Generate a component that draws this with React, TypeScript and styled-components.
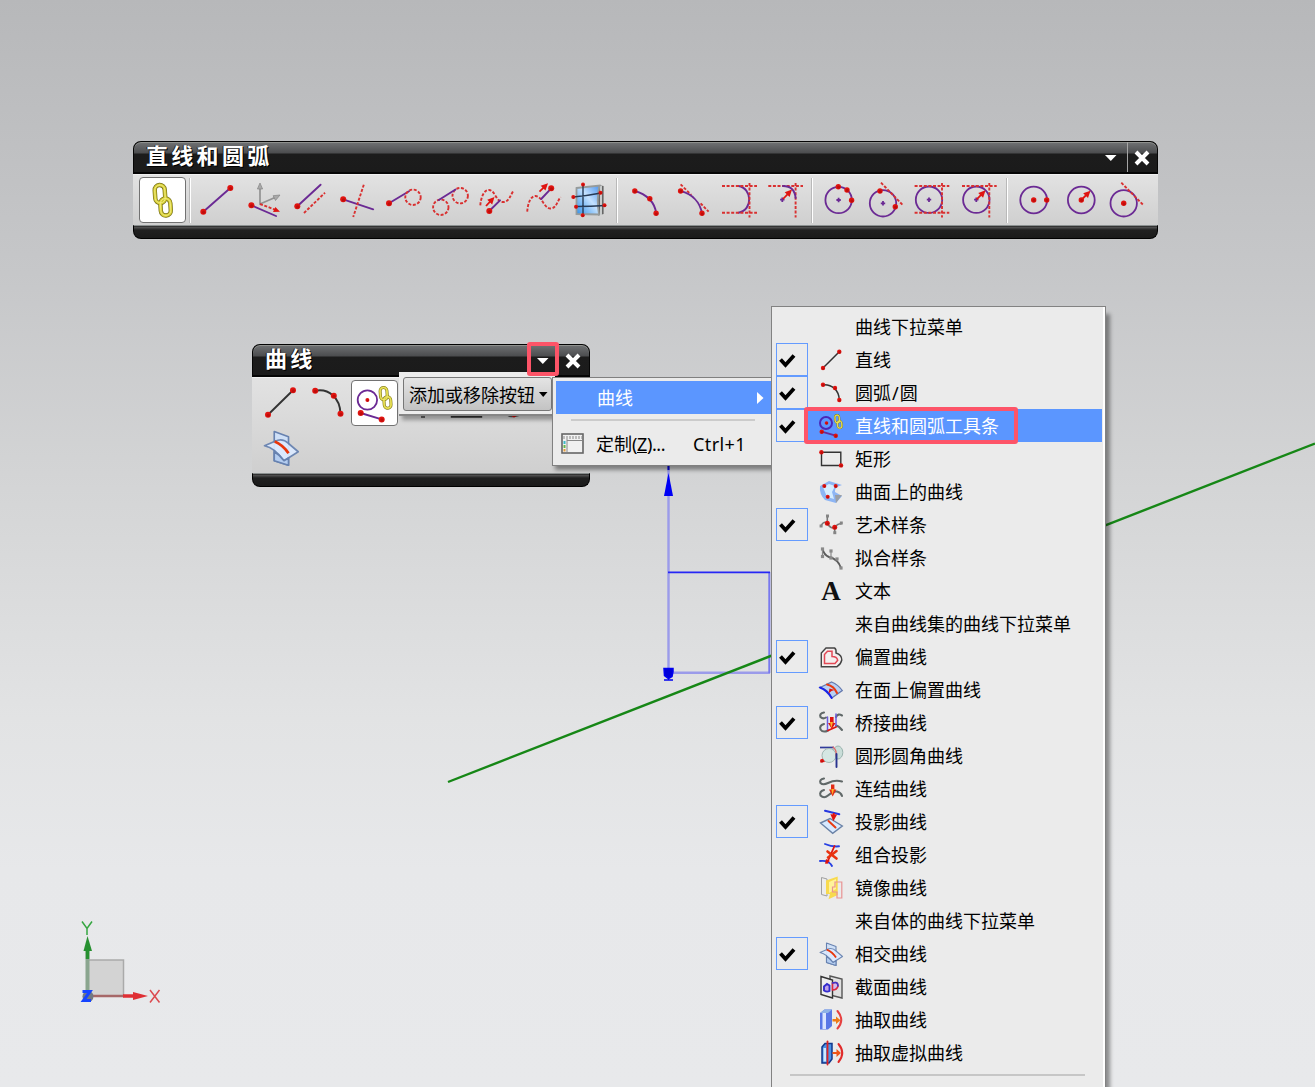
import React from "react";
import styled, { createGlobalStyle, css } from "styled-components";

const cjk = `"Noto Sans CJK SC", sans-serif`;
const RED = "#e01410";
const PURPLE = "#6b2a94";

const GlobalStyle = createGlobalStyle`
  * { box-sizing: border-box; }
  body { margin: 0; overflow: hidden; font-family: "Noto Sans", ${cjk}; }
`;

const Desktop = styled.main`
  position: relative;
  width: 1315px;
  height: 1087px;
  overflow: hidden;
  background: linear-gradient(#b7b8ba 0%, #c6c7c9 25%, #d4d5d6 45%, #e2e3e4 66%, #e7e8ea 80%, #e8e9eb 100%);
`;

const Viewport = styled.svg`
  position: absolute;
  inset: 0;
`;

const ToolWindow = styled.section<{ $x: number; $y: number; $w: number }>`
  position: absolute;
  left: ${(p) => p.$x}px;
  top: ${(p) => p.$y}px;
  width: ${(p) => p.$w}px;
  display: flex;
  flex-direction: column;
`;

const TitleBar = styled.header`
  display: flex;
  height: 33px;
  padding-left: 12px;
  border: 1px solid #050505;
  border-bottom-width: 2px;
  border-radius: 8px 8px 0 0;
  box-shadow: inset 0 1px 0 #8f918e;
  background: linear-gradient(#707274 0, #4c4d4f 11px, #1c1c1c 12px, #1b1b1b 100%);
`;

const Title = styled.h1`
  flex: 1;
  margin: 0;
  color: #fff;
  font: 700 22px/25px ${cjk};
  letter-spacing: 3.3px;
  text-shadow: 1px 1px 0 #000, -1px 0 0 #222;
`;

const TitleButton = styled.button<{ $divider?: boolean; $w: number }>`
  display: grid;
  place-items: center;
  width: ${(p) => p.$w}px;
  padding: 2px 0 0;
  border: 0;
  border-left: ${(p) => (p.$divider ? "1px solid #a5a5a5" : "0")};
  background: none;
`;

const ToolBody = styled.div<{ $h: number; $gutter?: number }>`
  display: flex;
  flex-wrap: wrap;
  align-content: flex-start;
  height: ${(p) => p.$h}px;
  padding: 2px ${(p) => p.$gutter ?? 4}px 0 6px;
  border-top: 1px solid #f0f0f0;
  background: linear-gradient(#e2e2e2, #cfcfcf);
`;

const WindowFoot = styled.footer`
  height: 14px;
  border: 1px solid #000;
  border-top-color: #8b9090;
  border-radius: 0 0 8px 8px;
  background: linear-gradient(#111 0, #565656 1px, #202020 4px, #1a1a1a 100%);
`;

const ToolButton = styled.button<{ $active?: boolean }>`
  display: grid;
  place-items: center;
  width: 46.5px;
  height: 45.5px;
  padding: 0;
  border: 0;
  background: none;
  ${(p) =>
    p.$active &&
    css`
      border: 1.5px solid #727272;
      border-radius: 4px;
      background: #fff;
    `}
`;

const ToolSeparator = styled.span`
  width: 8.7px;
  height: 45px;
  padding: 1px 3.5px 0;
  &::before {
    content: "";
    display: block;
    width: 2px;
    height: 45px;
    background: linear-gradient(90deg, #b9b9b9 50%, #fff 50%);
  }
`;

const DropTip = styled.div`
  position: absolute;
  left: 399px;
  top: 372px;
  width: 156px;
  height: 44px;
  padding: 5px 4px;
  background: #ececec;
  border-bottom: 2px solid #858585;
  box-shadow: 3px 4px 4px #0005;
`;

const DropButton = styled.button`
  display: flex;
  align-items: center;
  gap: 4px;
  width: 149px;
  height: 34px;
  padding: 0 0 0 5px;
  border: 1.5px solid #777;
  border-radius: 3px;
  background: linear-gradient(#e4e4e4, #c3c3c3);
  color: #000;
  font: 18px/30px ${cjk};
  white-space: nowrap;
`;

const SubMenu = styled.div`
  position: absolute;
  left: 552px;
  top: 377px;
  width: 222px;
  height: 89px;
  padding: 3px 0 0 3px;
  border: 1.5px solid #808080;
  background: #ebebeb;
  box-shadow: 3px 4px 4px #0006;
`;

const SubItem = styled.div<{ $on?: boolean }>`
  display: flex;
  align-items: center;
  height: ${(p) => (p.$on ? 33 : 46)}px;
  padding-left: ${(p) => (p.$on ? 41 : 5)}px;
  background: ${(p) => (p.$on ? "#5b96ff" : "none")};
  color: ${(p) => (p.$on ? "#fff" : "#000")};
  font: 18px/30px "Noto Sans", ${cjk};
  white-space: nowrap;
`;

const SubLabel = styled.span<{ $w: number }>`
  width: ${(p) => p.$w}px;
`;

const KeyName = styled.span`
  letter-spacing: -0.4px;
`;

const Shortcut = styled.span`
  font-family: "Noto Sans";
  font-size: 18px;
  letter-spacing: 0.4px;
`;

const SubRule = styled.hr`
  height: 2px;
  margin: 5px 18px 0 15px;
  border: 0;
  background: #cbcbcb;
`;

const Menu = styled.ul`
  position: absolute;
  left: 771px;
  top: 306px;
  width: 335px;
  height: 800px;
  margin: 0;
  padding: 3px 3px 0 4px;
  list-style: none;
  border: 1.5px solid #828282;
  background: #ebebeb;
  box-shadow: inset -2px 0 0 #fff, 5px 7px 4px -1px #0006;
`;

const MenuRow = styled.li<{ $on?: boolean }>`
  display: grid;
  grid-template-columns: 32px 11px 24px 12px 1fr;
  align-items: center;
  height: 33px;
  background: ${(p) => (p.$on ? "linear-gradient(90deg, #ebebeb 32px, #5b96ff 32px)" : "none")};
  color: ${(p) => (p.$on ? "#fff" : "#000")};
`;

const CheckCell = styled.span<{ $on?: boolean }>`
  display: flex;
  align-items: center;
  height: 33px;
  padding: 2px 0 0 2px;
  border: ${(p) => (p.$on ? "1.5px solid #649bff" : "0")};
`;

const IconCell = styled.span`
  grid-column: 3;
  display: flex;
  height: 24px;
`;

const Label = styled.span`
  grid-column: 5;
  font: 18px/32px "Noto Sans", ${cjk};
  white-space: nowrap;
`;

const Slash = styled.span`
  padding: 0 1px;
`;

const LetterIcon = styled.b`
  width: 24px;
  color: #111;
  font: 700 27px/25px "Liberation Serif", serif;
  text-align: center;
`;

const MenuRule = styled.li`
  height: 2px;
  margin: 5px 17px 0 14px;
  background: #c6c6c6;
`;

const Marker = styled.div<{ $x: number; $y: number; $w: number; $h: number }>`
  position: absolute;
  left: ${(p) => p.$x}px;
  top: ${(p) => p.$y}px;
  width: ${(p) => p.$w}px;
  height: ${(p) => p.$h}px;
  border: 4.5px solid #fd5468;
  border-radius: 3px;
`;

/* ---------- drawing primitives ---------- */

const Dot = ({ x, y, r = 3 }: { x: number; y: number; r?: number }) => (
  <g>
    <circle cx={x} cy={y} r={r} fill={RED} />
    <circle cx={x + 0.3} cy={y + 0.6} r={r * 0.55} fill="#a80808" opacity={0.6} />
  </g>
);
const Stroke = ({ d, c = PURPLE, w = 1.9 }: { d: string; c?: string; w?: number }) => (
  <path d={d} stroke={c} strokeWidth={w} fill="none" strokeLinecap="round" strokeLinejoin="round" />
);
const Dash = ({ d }: { d: string }) => (
  <path d={d} stroke="#d93030" strokeWidth={1.9} fill="none" strokeDasharray="3 1.6" />
);
const Ring = ({ x, y, r = 13.2 }: { x: number; y: number; r?: number }) => (
  <circle cx={x} cy={y} r={r} fill="none" stroke={PURPLE} strokeWidth={1.8} />
);
const Plus = ({ x, y }: { x: number; y: number }) => (
  <path d={`M${x - 2.2} ${y}h4.4M${x} ${y - 2.2}v4.4`} stroke={PURPLE} strokeWidth={1.8} />
);
const Arrow = ({ x, y, to }: { x: number; y: number; to: [number, number] }) => {
  const a = Math.atan2(to[1] - y, to[0] - x);
  const p = (d: number, s: number) =>
    `${to[0] - d * Math.cos(a) + s * Math.sin(a)} ${to[1] - d * Math.sin(a) - s * Math.cos(a)}`;
  return (
    <g>
      <path d={`M${x} ${y}L${p(3, 0)}`} stroke={RED} strokeWidth={1.8} />
      <path d={`M${to[0]} ${to[1]}L${p(7, 3.4)}L${p(7, -3.4)}Z`} fill={RED} />
    </g>
  );
};
const Chain = ({ x, y, s }: { x: number; y: number; s: number }) => (
  <g transform={`translate(${x} ${y}) scale(${s})`} fill="none" strokeLinecap="round">
    {["#77711a", "#d8cf35", "#f1ec86"].map((c, i) => (
      <g key={c} stroke={c} strokeWidth={[4.4, 3, 0.9][i]}>
        <rect x={-7.5} y={-15} width={10} height={18} rx={5} transform="rotate(-4 -3 -6)" />
        <rect x={-2} y={-1.5} width={10} height={17} rx={5} transform="rotate(-4 3 6)" />
      </g>
    ))}
  </g>
);
const Icon = ({ size = 36, children }: { size?: number; children: React.ReactNode }) => (
  <svg width={size} height={size} viewBox={`0 0 ${size} ${size}`} overflow="visible">
    {children}
  </svg>
);

/* ---------- toolbar icons ---------- */

const lineTools = [
  <><Stroke d="M4.3 29.7L31.3 6" /><Dot x={4.3} y={29.7} /><Dot x={31.3} y={6} /></>,
  <>
    <Stroke d="M14 22V6M14 22L29 15.5" c="#929292" w={1.7} />
    <path d="M14 1l2.6 6h-5.2zM34 13l-4.5 5.5-2.4-4.8z" fill="#a9a9a9" stroke="#858585" strokeWidth={0.7} />
    <Dash d="M14 22L30 28" />
    <path d="M34 29.7l-7 .2 2.4-5z" fill={RED} />
    <Stroke d="M5.4 23.3L30 34" /><Dot x={5.4} y={23.3} />
  </>,
  <><Stroke d="M5.3 24.3L28.6 2.7" /><Dash d="M12 31L33 10.7" /><Dot x={5.3} y={24.3} /></>,
  <><Stroke d="M4.2 17.3L34.2 27.3" /><Dash d="M24.8 2.7L14.2 35" /><Dot x={4.2} y={17.3} /></>,
  <><Stroke d="M4 21.3L24 9.3" /><Dash d="M35.7 15.3a7.7 7.7 0 1 1-15.4 0a7.7 7.7 0 1 1 15.4 0" /><Dot x={4} y={21.3} /></>,
  <>
    <Dash d="M35.9 13.7a7.7 7.7 0 1 1-15.4 0a7.7 7.7 0 1 1 15.4 0M16.5 25.3a7.7 7.7 0 1 1-15.4 0a7.7 7.7 0 1 1 15.4 0" />
    <Stroke d="M6.8 18L23.5 7.5" />
  </>,
  <>
    <Dash d="M2.3 23.3C3 15 6 8 11 8C17 8 18 20 25 20C31 20 32 14 35.5 8.5" />
    <Stroke d="M11.3 29L22 18.3" /><Arrow x={8} y={24} to={[16.5, 15]} /><Dot x={11.3} y={29} />
  </>,
  <>
    <Dash d="M2.2 29.7C3 20 6 14 10.5 14C17 14 19 26.5 25.5 26.5C31 26.5 32 20 35.5 15" />
    <Stroke d="M16.2 17L26.2 6.3" /><Arrow x={14.5} y={9.7} to={[23, 1.2]} /><Dot x={26.2} y={6.3} />
  </>,
  <>
    <defs>
      <linearGradient id="glass" x1="0" y1="1" x2="1" y2="0">
        <stop stopColor="#2f8fe8" /><stop offset=".55" stopColor="#c5e2ff" /><stop offset="1" stopColor="#4b93ec" />
      </linearGradient>
    </defs>
    <path d="M27 3L32.6 4V32L27 33.5Z" fill="#666" />
    <path d="M30 4V33" stroke="#c9cccc" strokeWidth={2} />
    <path d="M5.5 6L28.5 3.5C26.5 12 26.5 24 28 32.5L5.5 32Z" fill="url(#glass)" stroke="#969b9b" strokeWidth={1.8} />
    <Stroke d="M12 2V34M2 15Q15 14 30 11M5 24.5Q20 24.5 34 23.5" c="#263a55" w={1.4} />
    {[[12, 2.5], [2.3, 15], [29.5, 10.7], [5, 24.7], [33.5, 23.3], [11.7, 33.3]].map(([x, y]) => <Dot key={`${x}`} x={x} y={y} r={2} />)}
  </>,
];

const arcTools = [
  <><Stroke d="M7.8 9C19 12 28 20 29.1 31.3" /><Dot x={7.8} y={9} r={2.7} /><Dot x={22.8} y={16.7} r={2.7} /><Dot x={29.1} y={31.3} r={2.7} /></>,
  <><Dash d="M7.6 2.3L18.3 13M27.6 21.3L35.6 29.7" /><Stroke d="M7.6 9C19 12 27 20 29 31.3" /><Dot x={7.6} y={9} r={2.7} /><Dot x={29} y={31.3} r={2.7} /></>,
  <><Stroke d="M18.5 4C32 6 33.5 28 18.5 30.7" /><Dash d="M2 4H37M2 30.7H37M29.5 1V35.5" /></>,
  <><Dash d="M2.3 4H37M29.6 1V35.5" /><Stroke d="M17 4Q28.5 4 29.6 16" /><Plus x={16.3} y={17.7} /><Arrow x={17} y={17} to={[26, 7.6]} /></>,
];

const circleTools = [
  <><Ring x={17.6} y={18} /><Plus x={17.6} y={18} /><Dot x={17.3} y={4.7} r={2.7} /><Dot x={26} y={8} r={2.7} /><Dot x={30.6} y={18.3} r={2.7} /></>,
  <><Ring x={15} y={21.3} /><Plus x={15} y={21.3} /><Dash d="M13 .7L34.7 23" /><Dot x={12} y={9} r={2.7} /><Dot x={27.3} y={24.7} r={2.7} /></>,
  <><Ring x={15} y={17.7} /><Plus x={15} y={17.7} /><Dash d="M.6 4H35.3M.6 30.7H35.3M28 1V35.5" /></>,
  <><Ring x={15.3} y={17.7} /><Dash d="M1 4H35.7M28.3 1V35.5" /><Plus x={15.3} y={17.7} /><Arrow x={15.7} y={17.3} to={[24.6, 8.3]} /></>,
];

const fullCircleTools = [
  <><Ring x={17.7} y={18} r={13.4} /><Dot x={17.7} y={18} r={2.7} /><Dot x={30.7} y={18} r={2.7} /></>,
  <><Ring x={18.3} y={18} r={13.4} /><Arrow x={18.3} y={18} to={[27.5, 8.7]} /><Dot x={18.3} y={18} r={2.7} /></>,
  <><Ring x={14.7} y={21.3} /><Dash d="M12.3 .7L34.3 23" /><Dot x={14.7} y={21.3} r={2.7} /></>,
];

const Crossing = () => (
  <g strokeLinejoin="round" stroke="#6782b0" strokeWidth={1.1}>
    <path d="M7.5 1L17 4.5V23.5L7.5 20.5Z" fill="#cfe0f7" />
    <path d="M1 10.5L8 7.5Q13 5 17 9L23.5 14.5L14 20.5Q8 12 1 10.5Z" fill="#dceaff" opacity={0.93} />
    <path d="M7.5 14.5V20.5L17 23.5V18.7L14 20.5Q11 16.5 7.5 14.5Z" fill="#b4cdf0" />
    <path d="M7.8 7.6Q13.5 10 17 15.5" fill="none" stroke="#e8360c" strokeWidth={1.8} />
  </g>
);

/* ---------- menu icons (24px grid) ---------- */

const menuIcons: Record<string, React.ReactNode> = {
  line: <><Stroke d="M4 20L20.3 3.7" c="#333" w={1.5} /><Dot x={4} y={20} r={2.2} /><Dot x={20.3} y={3.7} r={2.2} /></>,
  arc: <><Stroke d="M4 3.7C13 3 20 9 20.3 19" c="#333" w={1.5} /><Dot x={4} y={3.7} r={2.2} /><Dot x={16} y={7} r={2.2} /><Dot x={20.3} y={19} r={2.2} /></>,
  lineArc: (
    <>
      <circle cx={7} cy={9} r={6} fill="none" stroke="#4b28b8" strokeWidth={2} />
      <Chain x={19.3} y={7.5} s={0.43} />
      <Stroke d="M2.7 17.7L16.7 21.7" /><Dot x={7.5} y={9} r={1.8} /><Dot x={2.7} y={17.7} r={2.2} /><Dot x={16.7} y={21.7} r={2.2} />
    </>
  ),
  rect: <><path d="M2.5 5.3H21.8V18.5H2.5Z" fill="none" stroke="#333" strokeWidth={1.4} /><Dot x={2.4} y={5.2} r={2.2} /><Dot x={22} y={18.4} r={2.2} /></>,
  surface: (
    <>
      <path d="M1 6L10 1L23 5Q15 7 16 12L23 16L17 23L6 20Q0 14 1 6Z" fill="#8db5f4" />
      <path d="M4 7L10 4L16 6L13 12L15 19L8 17Z" fill="#d5edff" />
      <path d="M16 15L23 15L17 23Z" fill="#9a9fa6" />
      <Dot x={5.3} y={6} r={2} /><Dot x={16.7} y={6} r={2} /><Dot x={8.7} y={16.7} r={2} />
    </>
  ),
  spline: (
    <>
      <Stroke d="M8.3 3V10M15.7 14V20M2 13Q5 7 8.5 10.5Q12 17 16 13.5Q20 10 22 11" c="#777" w={1.6} />
      {["M7 1.5h3v3h-3z", "M.6 11.5h3v3h-3z", "M14.3 18.2h3v3h-3z", "M20.8 8.5h3v3h-3z"].map((d) => <path key={d} d={d} fill="#858585" />)}
      <Dot x={8.3} y={10.3} r={2.5} /><Dot x={15.7} y={14.3} r={2.5} />
    </>
  ),
  fit: (
    <>
      <Stroke d="M3.5 3Q5 9 10 11Q19 13 22 22" c="#5c5c5c" w={1.9} />
      {[[3.5, 3], [3.5, 10.5], [12, 5], [12, 12], [18, 13], [22, 22]].map(([x, y]) => <rect key={`${x}-${y}`} x={x - 1.6} y={y - 1.6} width={3.2} height={3.2} fill="#8a8a8a" />)}
      <Stroke d="M3.5 3V10.5M12 5V12" c="#8a8a8a" w={1.2} />
    </>
  ),
  offset: (
    <>
      <path d="M2.3 21.7V8L7 3H15.5Q17.5 4 17 8Q23 10 22.8 15Q22 19 18 21.7Z" fill="#f4eeee" stroke="#444" strokeWidth={1.4} />
      <path d="M5.5 18.5V9.5L8.5 6.3H13V11.5Q18 11.5 18.7 15.3L16 18.5Z" fill="none" stroke="#e24855" strokeWidth={1.5} />
    </>
  ),
  offsetFace: (
    <>
      <path d="M1 9.5L12.7 4Q19 6.5 23.3 12.5L12.7 20Q9 11 1 9.5Z" fill="#b9d0f4" stroke="#6479ad" strokeWidth={1.2} />
      <Stroke d="M1 9.5Q8 12 12.7 20" c="#1924e8" w={2} /><Stroke d="M8 6.5Q15 8 18 15" c="#e83c12" w={2} />
      <path d="M9.5 15.5l1-5 5 1.5-3 1z" fill={RED} />
    </>
  ),
  bridge: (
    <>
      <Stroke d="M5 1.5Q0 2.5 1.5 6Q4 8.5 7 6.5M17 6Q19 2 23 4.5" c="#606868" w={2.1} />
      <Stroke d="M5 13Q0 14.5 1.5 18.5Q4 22 9 19.5M17 14.5Q20 15 23 19" c="#606868" w={2.1} />
      <Stroke d="M8.5 6V19M17 3V15" c="#6b5bdf" w={1.5} />
      <path d="M11 6h3.6v6h2l-3.8 6-3.8-6h2z" fill={RED} /><path d="M11 11h3l-1.7 6z" fill="#ffb22b" />
      <Stroke d="M9 19.5L17 16" c={RED} w={1.8} />
    </>
  ),
  fillet: (
    <>
      <path d="M1 3.5H15" stroke="#313c9a" strokeWidth={1.7} />
      <ellipse cx={19} cy={8.5} rx={4.8} ry={6.5} fill="#c9ddd8" stroke="#9ab4ae" />
      <circle cx={10} cy={11.5} r={7} fill="#d5e7e3" stroke="#a2b8b4" />
      <Stroke d="M14 3Q18 6 17 12" c="#e26666" w={1.2} /><Stroke d="M17.5 10V23" c="#28348f" />
      <path d="M1 18.5l2.5-4 2.5 3.5z" fill={RED} /><Dot x={2.8} y={16.8} r={1.8} />
    </>
  ),
  join: (
    <>
      <Stroke d="M5 1.5Q0 2.5 1.5 6Q4 8.5 9 6Q16 2.5 23 4.5" c="#606868" w={2.1} />
      <Stroke d="M5 13Q0 14.5 1.5 18.5Q5 22 9 18.5Q14 14 18 14.5Q22 15.5 23 19" c="#606868" w={2.1} />
      <path d="M12 7.5h3.4v5h2l-3.7 7-3.7-7h2z" fill="#e22b16" /><path d="M12.3 12h2.8l-1.6 6z" fill="#ffae22" />
    </>
  ),
  project: (
    <>
      <path d="M1.5 13L11 8.5L23.3 16L13.7 23.3Z" fill="#d7e9ff" stroke="#6a82a6" strokeWidth={1.4} />
      <Stroke d="M9.5 11L16.5 17.5" c="#e83c12" w={2} /><Stroke d="M6 .7L20.3 4.3" c="#2738e0" w={2} /><Arrow x={14.8} y={3} to={[14.4, 11.3]} />
    </>
  ),
  combined: (
    <>
      <Stroke d="M6 1Q13 4 20 3.3M1 18Q10 17 13 23" c="#2740e3" /><Stroke d="M15.5 3L12 11L8 20" c={RED} w={1.8} />
      <Stroke d="M8.5 8.5L17.5 15.5M17.5 8L9 14.5" c="#e9330f" w={2.6} />
      <path d="M6 21l1-5 4 2z" fill={RED} />
    </>
  ),
  mirror: (
    <>
      <path d="M2.5 1.5V18.5L8 20V3Z" fill="#ececec" stroke="#a0a0a0" />
      <path d="M7 4.5L18.7 .5V19L9.5 23.3L11 18H7Z" fill="#f8da4e" /><path d="M10 6L17 3V13L10 17Z" fill="#fff39a" />
      <path d="M16 6H22.8V22H18V16H13.5V11H16Z" fill="none" stroke="#e99393" strokeWidth={1.2} />
    </>
  ),
  crossing: <Crossing />,
  section: (
    <>
      <path d="M11 1L23 4V23L11 20Z" fill="#e0e0e0" stroke="#555" strokeWidth={1.4} />
      <path d="M2 1.5L13.5 5V23L2 19.5Z" fill="#eee" stroke="#333" strokeWidth={1.4} />
      <path d="M5 15.5V11.5L8 9L10.5 10.5V16Q8 17.5 5 15.5Z" fill="#bfa1e8" stroke="#332ccc" strokeWidth={1.9} />
      <path d="M13.5 8Q19 6 19 11Q18 15 13.5 15Z" fill="#d0bcf0" stroke="#dc2740" strokeWidth={1.6} />
      <Stroke d="M13.5 8Q19 6 19 11" c="#3b36cc" w={1.6} />
    </>
  ),
  extract: (
    <>
      <path d="M1 5L5.5 1.5H13V18L9 21.5H1Z" fill="#5a78e6" /><path d="M3.5 5H7V21H3.5Z" fill="#dae5ff" /><path d="M5.5 1.5H13L9 5H1Z" fill="#8fb3e6" />
      <Stroke d="M18.5 3Q26 12 18.5 20.5" c="#e64040" w={2} /><path d="M13.5 11h3.5V8.5l4.5 3.7-4.5 3.7v-2.5h-3.5z" fill="#ee7a15" />
    </>
  ),
  extractVirtual: (
    <>
      <path d="M3 6L6 2.5H13V18L10 22H3Z" fill="#4a93e8" stroke="#12388c" strokeWidth={1.5} /><path d="M4.5 7H7V20.5H4.5Z" fill="#cfeaff" />
      <Stroke d="M8.5 .5V23.5" c="#dd2424" w={1.8} /><Stroke d="M19.5 3Q27 12 19.5 21" c="#e02a2a" w={2} />
      <path d="M13.5 11h4V8l4.5 4-4.5 4v-3h-4z" fill="#ee5518" />
    </>
  ),
};

type Entry = { text: string; icon?: string; checked?: boolean; on?: boolean };
const entries: Entry[] = [
  { text: "曲线下拉菜单" },
  { text: "直线", icon: "line", checked: true },
  { text: "圆弧/圆", icon: "arc", checked: true },
  { text: "直线和圆弧工具条", icon: "lineArc", checked: true, on: true },
  { text: "矩形", icon: "rect" },
  { text: "曲面上的曲线", icon: "surface" },
  { text: "艺术样条", icon: "spline", checked: true },
  { text: "拟合样条", icon: "fit" },
  { text: "文本", icon: "letter" },
  { text: "来自曲线集的曲线下拉菜单" },
  { text: "偏置曲线", icon: "offset", checked: true },
  { text: "在面上偏置曲线", icon: "offsetFace" },
  { text: "桥接曲线", icon: "bridge", checked: true },
  { text: "圆形圆角曲线", icon: "fillet" },
  { text: "连结曲线", icon: "join" },
  { text: "投影曲线", icon: "project", checked: true },
  { text: "组合投影", icon: "combined" },
  { text: "镜像曲线", icon: "mirror" },
  { text: "来自体的曲线下拉菜单" },
  { text: "相交曲线", icon: "crossing", checked: true },
  { text: "截面曲线", icon: "section" },
  { text: "抽取曲线", icon: "extract" },
  { text: "抽取虚拟曲线", icon: "extractVirtual" },
];

const labelParts = (text: string) =>
  text.split("/").map((part, i) => (
    <React.Fragment key={part}>
      {i > 0 && <Slash>/</Slash>}
      {part}
    </React.Fragment>
  ));

const WindowHead = ({ title, split }: { title: string; split?: boolean }) => (
  <TitleBar>
    <Title>{title}</Title>
    <TitleButton $w={32}>
      <svg width="12" height="6"><path d="M0 0h11.5L5.8 6z" fill="#fff" /></svg>
    </TitleButton>
    <TitleButton $w={30} $divider={split}>
      <svg width="18" height="18"><path d="M2 3L14 15M14 3L2 15" stroke="#fff" strokeWidth="4" /></svg>
    </TitleButton>
  </TitleBar>
);

const Tools = ({ items }: { items: React.ReactNode[] }) => (
  <>{items.map((item, i) => <ToolButton key={i}><Icon>{item}</Icon></ToolButton>)}</>
);

const Scene = () => (
  <Viewport width="1315" height="1087">
    <path d="M668.5 466V673M668 672.8H770" stroke="#9b9bea" strokeWidth="2.4" />
    <path d="M769.3 572V673" stroke="#7878ee" strokeWidth="2" />
    <path d="M668 572.3H770" stroke="#2626f5" strokeWidth="1.8" />
    <path d="M448 782L1315 443.5" stroke="#168716" strokeWidth="2.4" />
    <path d="M668.5 473L673 496H664Z" fill="#0000f5" />
    <path d="M668.5 464V470" stroke="#0000e0" strokeWidth="2" />
    <path d="M664 668.5h9v3l-1 5-3.5 2-4-3zM664 680h9" fill="#0000d8" stroke="#0000f0" strokeWidth="1.5" />

    <rect x="88" y="960" width="35.5" height="36" fill="#d3d3d3" stroke="#aaa" strokeWidth="1.5" />
    <path d="M87.5 996V950" stroke="#8aa58f" strokeWidth="4" />
    <path d="M87.5 959V948" stroke="#269030" strokeWidth="3.5" />
    <path d="M87.5 936L92 951H83.5Z" fill="#269030" />
    <path d="M87 996H124" stroke="#a66868" strokeWidth="2.5" />
    <path d="M123 996H135" stroke="#df2f34" strokeWidth="3.5" />
    <path d="M148 996L133 1000V992Z" fill="#df2f34" />
    <path d="M82 921.5L87 928.5L92 921.5M87 928.5V935" fill="none" stroke="#35a641" strokeWidth="1.5" />
    <path d="M150 990L159.5 1002.5M159.5 990L150 1002.5" stroke="#dc4a4f" strokeWidth="1.5" />
    <circle cx="88" cy="996.5" r="5.5" fill="#717983" />
    <path d="M82.5 991.5H90L83.5 1000.5H91" fill="none" stroke="#1544ff" strokeWidth="3" />
  </Viewport>
);

export default function App() {
  return (
    <Desktop>
      <GlobalStyle />
      <Scene />

      <ToolWindow $x={133} $y={141} $w={1025}>
        <WindowHead title="直线和圆弧" split />
        <ToolBody $h={51}>
          <ToolButton $active><Icon><Chain x={18.5} y={18} s={1} /></Icon></ToolButton>
          <ToolSeparator />
          <Tools items={lineTools} />
          <ToolSeparator />
          <Tools items={arcTools} />
          <ToolSeparator />
          <Tools items={circleTools} />
          <ToolSeparator />
          <Tools items={fullCircleTools} />
        </ToolBody>
        <WindowFoot />
      </ToolWindow>

      <ToolWindow $x={252} $y={344} $w={338}>
        <WindowHead title="曲线" />
        <ToolBody $h={96} $gutter={30}>
          <ToolButton><Icon><Stroke d="M5 29.7L30 5.3" c="#333" /><Dot x={5} y={29.7} /><Dot x={30} y={5.3} /></Icon></ToolButton>
          <ToolButton><Icon><Stroke d="M5.2 5.7C19 3 30 13 30.5 28.7" c="#333" /><Dot x={5.2} y={5.7} /><Dot x={23.8} y={10.7} /><Dot x={30.5} y={28.7} /></Icon></ToolButton>
          <ToolButton $active>
            <Icon>
              <Ring x={11.4} y={15} r={9.7} /><Dot x={11.4} y={15} r={2} /><Chain x={29.4} y={12.7} s={0.68} />
              <Stroke d="M4.7 28L25.7 34.4" /><Dot x={4.7} y={28} /><Dot x={25.7} y={34.4} />
            </Icon>
          </ToolButton>
          <ToolButton><Icon><Stroke d="M5 8Q10 20 20 31" c="#555" /><rect x={18} y={29} width={4} height={4} fill="#666" /></Icon></ToolButton>
          <ToolButton><Icon><path d="M3 31.5V14L12 8H24L32 24V31.5Z" fill="none" stroke="#333" strokeWidth={2.4} /></Icon></ToolButton>
          <ToolButton><Icon><Stroke d="M3 20Q12 38 28 27" c="#555" w={2.4} /><Dot x={18} y={30} r={2.4} /></Icon></ToolButton>
          <ToolButton><svg width="36" height="36" viewBox="0 0 24 24"><Crossing /></svg></ToolButton>
        </ToolBody>
        <WindowFoot />
      </ToolWindow>

      <DropTip>
        <DropButton>
          添加或移除按钮
          <svg width="9" height="5"><path d="M0 0h8.5L4.2 5z" fill="#000" /></svg>
        </DropButton>
      </DropTip>

      <SubMenu>
        <SubItem $on>
          <SubLabel $w={160}>曲线</SubLabel>
          <svg width="7" height="12"><path d="M0 0L6.5 6L0 12z" fill="#fff" /></svg>
        </SubItem>
        <SubRule />
        <SubItem>
          <svg width="35" height="22">
            <rect x="1" y="1" width="21" height="19" fill="#f1f1f1" stroke="#666" strokeWidth="1.6" />
            <path d="M2 4.5H21" stroke="#bcbcbc" strokeWidth="3" strokeDasharray="2 1" />
            <path d="M6 6V19M6 7.5H21" stroke="#888" />
            <path d="M3.5 8v3" stroke="#3bb9c8" strokeWidth="2" /><path d="M3.5 12v3" stroke="#67b84a" strokeWidth="2" /><path d="M3.5 16v2.5" stroke="#e59b3a" strokeWidth="2" />
          </svg>
          <SubLabel $w={97}>定制<KeyName>(<u>Z</u>)...</KeyName></SubLabel>
          <Shortcut>Ctrl+1</Shortcut>
        </SubItem>
      </SubMenu>

      <Menu>
        {entries.map((e) => (
          <MenuRow key={e.text} $on={e.on}>
            <CheckCell $on={e.checked}>
              {e.checked && (
                <svg width="18" height="16"><path d="M1.5 6.5L6.5 12L15 2.5" fill="none" stroke="#000" strokeWidth="3.8" /></svg>
              )}
            </CheckCell>
            {e.icon && (
              <IconCell>
                {e.icon === "letter" ? <LetterIcon>A</LetterIcon> : <Icon size={24}>{menuIcons[e.icon]}</Icon>}
              </IconCell>
            )}
            <Label>{labelParts(e.text)}</Label>
          </MenuRow>
        ))}
        <MenuRule />
      </Menu>

      <Marker $x={527} $y={342} $w={32} $h={34} />
      <Marker $x={804} $y={407} $w={214} $h={37} />
    </Desktop>
  );
}
